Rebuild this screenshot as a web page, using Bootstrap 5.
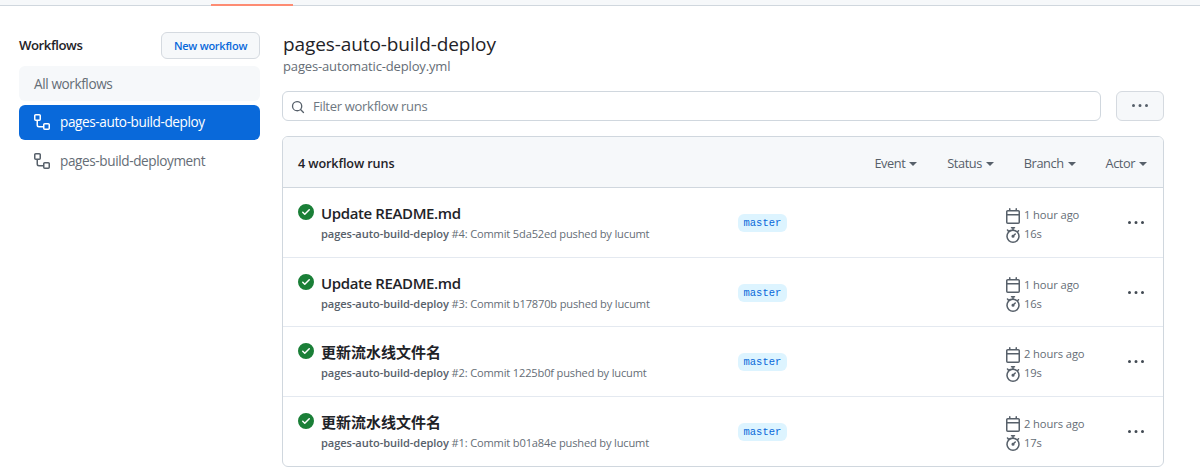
<!DOCTYPE html>
<html lang="en">
<head>
  <meta charset="UTF-8">
  <title>Workflow runs</title>
  <link href="https://cdn.jsdelivr.net/npm/bootstrap@5.3.2/dist/css/bootstrap.min.css" rel="stylesheet">
  <style>
    body {
      font-family: "Open Sans", "Noto Sans CJK SC", sans-serif;
      font-size: 14px;
      color: #1f2328;
      background: #fff;
      overflow: hidden;
    }
    svg { fill: currentColor; flex: none; display: block; }
    .top-strip {
      height: 6px;
      background: #f6f8fa;
      border-bottom: 1px solid #d0d7de;
      padding-left: 211px;
    }
    .top-strip span {
      display: block;
      width: 82px;
      height: 6px;
      background: #fd8c73;
      border-radius: 2px 2px 0 0;
      clip-path: inset(4px 0 0 0);
    }
    .page-wrap { padding: 26px 36px 0 19px; gap: 22px; }
    .side-col { width: 241px; flex: none; }
    .main-col { width: 882px; flex: none; }
    .side-title { font-size: 13.2px; font-weight: 600; letter-spacing: -.45px; }
    .new-btn {
      font-size: 11px;
      font-weight: 600;
      letter-spacing: -.25px;
      color: #0969da;
      background: #f6f8fa;
      border: 1px solid #d5dae0;
      border-radius: 6px;
      padding: 0;
      width: 99px;
      height: 27px;
      line-height: 25px;
    }
    .side-link {
      height: 35px;
      margin-bottom: 3.5px;
      border-radius: 6px;
      padding: 1px 0 0 15px;
      color: #656d76;
      font-size: 13.6px;
      letter-spacing: -.4px;
      text-decoration: none;
      gap: 10px;
    }
    .side-link svg { margin-top: -1px; color: #57606a; }
    .side-link.grey-link { background: #f6f8fa; }
    .side-link.on-link { background: #0969da; color: #fff; }
    .side-link.on-link svg { color: #fff; }
    .side-title-row { height: 27px; margin-bottom: 7px; }
    .run-title { font-size: 19px; line-height: 24px; font-weight: 400; margin: 0 0 1px; letter-spacing: -.1px; padding-left: 1px; }
    .run-file { font-size: 13px; line-height: 18px; color: #656d76; margin-bottom: 16px; letter-spacing: -.15px; padding-left: 1px; }
    .filter-box {
      height: 30px;
      width: 819px;
      border: 1px solid #d0d7de;
      border-radius: 6px;
      padding: 2px 0 0 8px;
      gap: 8px;
      color: #57606a;
      font-size: 13px;
      letter-spacing: -.3px;
    }
    .filter-box span { color: #6e7781; }
    .more-btn {
      width: 48px;
      height: 30px;
      padding: 0;
      background: #f6f8fa;
      border: 1px solid #d5dae0;
      border-radius: 6px;
      color: #57606a;
    }
    .runs-card { border: 1px solid #d0d7de; border-radius: 6px; margin-top: 15px; background: #fff; }
    .runs-head {
      height: 51px;
      background: #f6f8fa;
      border-bottom: 1px solid #d0d7de;
      border-radius: 5px 5px 0 0;
      padding: 3px 16px 0 15px;
    }
    .runs-count { font-size: 12.6px; font-weight: 600; letter-spacing: -.1px; margin-top: 1px; }
    .filter-menus { gap: 30px; color: #57606a; font-size: 12.8px; letter-spacing: -.45px; }
    .filter-menus span { display: flex; align-items: center; gap: 4px; }
    .filter-menus i {
      display: block;
      border: 4px solid transparent;
      border-top-color: #57606a;
      border-bottom: 0;
    }
    .run-row {
      height: 69.5px;
      border-bottom: 1px solid #e4e9f0;
      padding: 0 19px 0 15px;
    }
    .run-row:last-child { border-bottom: 0; height: 69px; }
    .run-name { width: 440px; padding-top: 14px; flex: none; }
    .run-head { gap: 7px; }
    .run-head svg { color: #1a7f37; margin-top: 2px; }
    .run-head b { font-size: 15px; line-height: 22px; font-weight: 600; }
    .run-head .latin-title { letter-spacing: -.38px; }
    .run-head .cjk-title { font-weight: 700; }
    .run-sub {
      font-size: 11.1px;
      line-height: 16px;
      color: #656d76;
      padding-left: 23px;
      margin-top: 2px;
      letter-spacing: -.17px;
      white-space: nowrap;
    }
    .run-sub strong { font-weight: 600; color: #57606a; letter-spacing: -.08px; }
    .branch-col { width: 267px; flex: none; padding-top: 26px; display: flex; align-items: flex-start; }
    .branch-tag {
      display: block;
      font-family: "Liberation Mono", monospace;
      font-size: 10.5px;
      line-height: 18px;
      height: 18px;
      padding: 0 5.5px;
      color: #0969da;
      background: #ddf4ff;
      border-radius: 6px;
    }
    .time-col { width: 108px; flex: none; padding-top: 18px; color: #656d76; font-size: 11.2px; letter-spacing: -.1px; }
    .time-col div { display: flex; align-items: center; gap: 3px; height: 19px; }
    .time-col svg { color: #57606a; }
    .dots-col { color: #424a53; padding-top: 27px; margin-left: 15px; }
  </style>
</head>
<body>

<div class="top-strip"><span></span></div>

<div class="page-wrap d-flex">
  <div class="side-col">
    <div class="side-title-row d-flex justify-content-between align-items-center">
      <span class="side-title">Workflows</span>
      <button class="new-btn" type="button">New workflow</button>
    </div>
    <a class="side-link grey-link d-flex align-items-center" href="#">All workflows</a>
    <a class="side-link on-link d-flex align-items-center" href="#">
      <svg width="16" height="16" viewBox="0 0 16 16"><path d="M0 1.75C0 .784.784 0 1.75 0h3.5C6.216 0 7 .784 7 1.75v3.5A1.75 1.75 0 0 1 5.25 7H4v4a1 1 0 0 0 1 1h4v-1.25C9 9.784 9.784 9 10.75 9h3.5c.966 0 1.75.784 1.75 1.75v3.5A1.75 1.75 0 0 1 14.25 16h-3.5A1.75 1.75 0 0 1 9 14.25v-.75H5A2.5 2.5 0 0 1 2.5 11V7h-.75A1.75 1.75 0 0 1 0 5.25Zm1.75-.25a.25.25 0 0 0-.25.25v3.5c0 .138.112.25.25.25h3.5a.25.25 0 0 0 .25-.25v-3.5a.25.25 0 0 0-.25-.25Zm9 9a.25.25 0 0 0-.25.25v3.5c0 .138.112.25.25.25h3.5a.25.25 0 0 0 .25-.25v-3.5a.25.25 0 0 0-.25-.25Z"/></svg>
      pages-auto-build-deploy
    </a>
    <a class="side-link d-flex align-items-center" href="#">
      <svg width="16" height="16" viewBox="0 0 16 16"><path d="M0 1.75C0 .784.784 0 1.75 0h3.5C6.216 0 7 .784 7 1.75v3.5A1.75 1.75 0 0 1 5.25 7H4v4a1 1 0 0 0 1 1h4v-1.25C9 9.784 9.784 9 10.75 9h3.5c.966 0 1.75.784 1.75 1.75v3.5A1.75 1.75 0 0 1 14.25 16h-3.5A1.75 1.75 0 0 1 9 14.25v-.75H5A2.5 2.5 0 0 1 2.5 11V7h-.75A1.75 1.75 0 0 1 0 5.25Zm1.75-.25a.25.25 0 0 0-.25.25v3.5c0 .138.112.25.25.25h3.5a.25.25 0 0 0 .25-.25v-3.5a.25.25 0 0 0-.25-.25Zm9 9a.25.25 0 0 0-.25.25v3.5c0 .138.112.25.25.25h3.5a.25.25 0 0 0 .25-.25v-3.5a.25.25 0 0 0-.25-.25Z"/></svg>
      pages-build-deployment
    </a>
  </div>

  <div class="main-col">
    <h1 class="run-title">pages-auto-build-deploy</h1>
    <div class="run-file">pages-automatic-deploy.yml</div>

    <div class="d-flex justify-content-between">
      <div class="filter-box d-flex align-items-center">
        <svg width="14" height="14" viewBox="0 0 16 16"><path d="M10.68 11.74a6 6 0 0 1-7.922-8.982 6 6 0 0 1 8.982 7.922l3.04 3.04a.749.749 0 0 1-.326 1.275.749.749 0 0 1-.734-.215ZM11.5 7a4.499 4.499 0 1 0-8.997 0A4.499 4.499 0 0 0 11.5 7Z"/></svg>
        <span>Filter workflow runs</span>
      </div>
      <button class="more-btn d-flex align-items-center justify-content-center" type="button">
        <svg width="16" height="16" viewBox="0 0 16 16"><path d="M8 9a1.5 1.5 0 1 0 0-3 1.5 1.5 0 0 0 0 3ZM1.5 9a1.5 1.5 0 1 0 0-3 1.5 1.5 0 0 0 0 3Zm13 0a1.5 1.5 0 1 0 0-3 1.5 1.5 0 0 0 0 3Z"/></svg>
      </button>
    </div>

    <div class="runs-card">
      <div class="runs-head d-flex justify-content-between align-items-center">
        <span class="runs-count">4 workflow runs</span>
        <div class="filter-menus d-flex">
          <span>Event <i></i></span>
          <span>Status <i></i></span>
          <span>Branch <i></i></span>
          <span>Actor <i></i></span>
        </div>
      </div>
      <div id="runRows"></div>
    </div>
  </div>
</div>

<script src="https://cdn.jsdelivr.net/npm/bootstrap@5.3.2/dist/js/bootstrap.bundle.min.js"></script>
<script>
  const runs = [
    { title: "Update README.md", kind: "latin-title", num: 4, sha: "5da52ed", when: "1 hour ago", took: "16s" },
    { title: "Update README.md", kind: "latin-title", num: 3, sha: "b17870b", when: "1 hour ago", took: "16s" },
    { title: "更新流水线文件名", kind: "cjk-title", num: 2, sha: "1225b0f", when: "2 hours ago", took: "19s" },
    { title: "更新流水线文件名", kind: "cjk-title", num: 1, sha: "b01a84e", when: "2 hours ago", took: "17s" }
  ];

  const checkIcon = '<svg width="16" height="16" viewBox="0 0 16 16"><path d="M8 16A8 8 0 1 1 8 0a8 8 0 0 1 0 16Zm3.78-9.72a.751.751 0 0 0-.018-1.042.751.751 0 0 0-1.042-.018L6.75 9.19 5.28 7.72a.751.751 0 0 0-1.042.018.751.751 0 0 0-.018 1.042l2 2a.75.75 0 0 0 1.06 0Z"/></svg>';
  const calendarIcon = '<svg width="16" height="16" viewBox="0 0 16 16"><path d="M4.75 0a.75.75 0 0 1 .75.75V2h5V.75a.75.75 0 0 1 1.5 0V2h1.25c.966 0 1.75.784 1.75 1.75v10.5A1.75 1.75 0 0 1 13.25 16H2.75A1.75 1.75 0 0 1 1 14.25V3.75C1 2.784 1.784 2 2.75 2H4V.75A.75.75 0 0 1 4.75 0ZM2.5 7.5v6.75c0 .138.112.25.25.25h10.5a.25.25 0 0 0 .25-.25V7.5Zm10.75-4H2.75a.25.25 0 0 0-.25.25V6h11V3.75a.25.25 0 0 0-.25-.25Z"/></svg>';
  const watchIcon = '<svg width="16" height="16" viewBox="0 0 16 16"><path d="M5.75.75A.75.75 0 0 1 6.5 0h3a.75.75 0 0 1 0 1.5h-.75v1l-.001.041a6.724 6.724 0 0 1 3.464 1.435l.007-.006.75-.75a.749.749 0 0 1 1.275.326.749.749 0 0 1-.215.734l-.75.75-.006.007a6.75 6.75 0 1 1-10.548 0L2.72 4.28l-.75-.75a.749.749 0 0 1 .326-1.275.749.749 0 0 1 .734.215l.75.75.007.006A6.72 6.72 0 0 1 7.25 2.541V1.5H6.5a.75.75 0 0 1-.75-.75ZM8 14.5a5.25 5.25 0 1 0-.001-10.501A5.25 5.25 0 0 0 8 14.5Zm.389-6.7 1.33-1.33a.75.75 0 1 1 1.061 1.06L9.45 8.861A1.503 1.503 0 0 1 8 10.75a1.499 1.499 0 1 1 .389-2.95Z"/></svg>';
  const dotsIcon = '<svg width="16" height="16" viewBox="0 0 16 16"><path d="M8 9a1.5 1.5 0 1 0 0-3 1.5 1.5 0 0 0 0 3ZM1.5 9a1.5 1.5 0 1 0 0-3 1.5 1.5 0 0 0 0 3Zm13 0a1.5 1.5 0 1 0 0-3 1.5 1.5 0 0 0 0 3Z"/></svg>';

  document.getElementById("runRows").innerHTML = runs.map(run => `
    <div class="run-row d-flex">
      <div class="run-name">
        <div class="run-head d-flex">${checkIcon}<b class="${run.kind}">${run.title}</b></div>
        <div class="run-sub"><strong>pages-auto-build-deploy</strong> #${run.num}: Commit ${run.sha} pushed by lucumt</div>
      </div>
      <div class="branch-col"><span class="branch-tag">master</span></div>
      <div class="time-col">
        <div>${calendarIcon}${run.when}</div>
        <div>${watchIcon}${run.took}</div>
      </div>
      <div class="dots-col">${dotsIcon}</div>
    </div>`).join("");
</script>

</body>
</html>
